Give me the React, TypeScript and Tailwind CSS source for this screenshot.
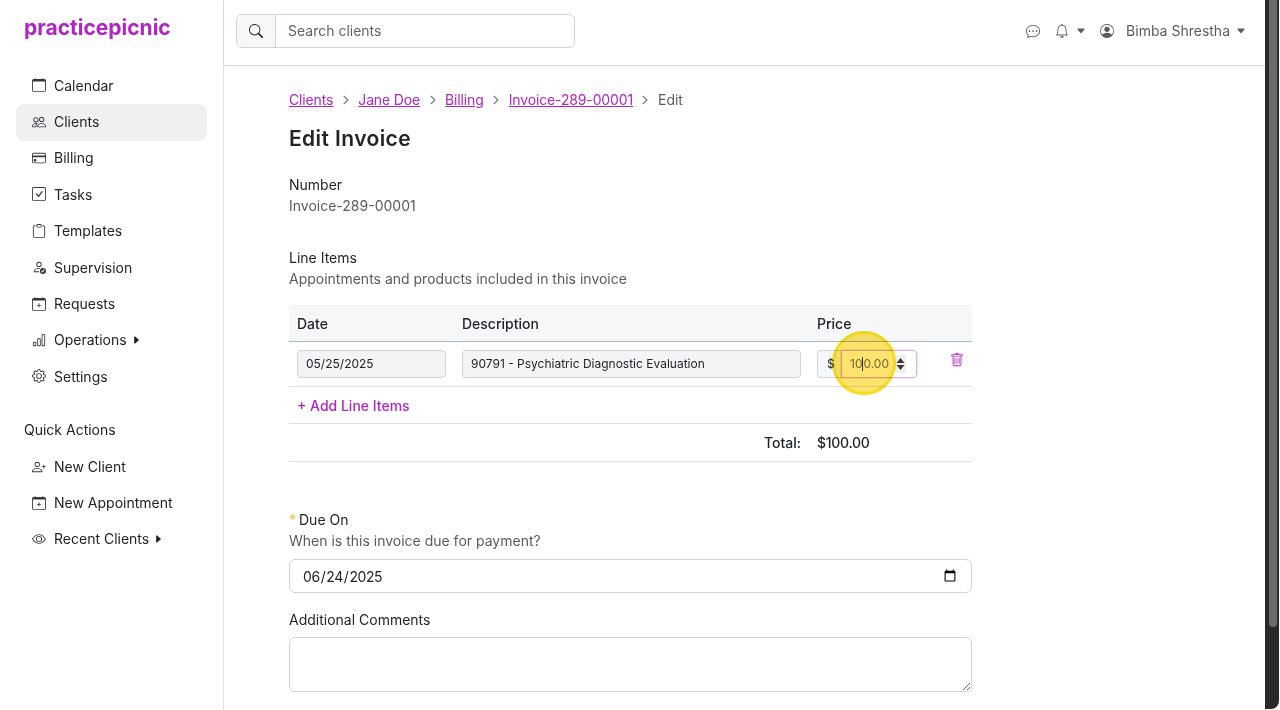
import React from "react";
import {
  BsBarChart,
  BsBell,
  BsCalendar,
  BsCalendarPlus,
  BsCaretDownFill,
  BsCaretRightFill,
  BsChatDots,
  BsCheckSquare,
  BsChevronRight,
  BsClipboard,
  BsCreditCard,
  BsEye,
  BsGear,
  BsPeople,
  BsPersonCheck,
  BsPersonCircle,
  BsPersonPlus,
  BsSearch,
  BsTrash,
} from "react-icons/bs";

function NavItem({
  icon,
  label,
  active,
  caret,
  compact,
}: {
  icon: React.ReactNode;
  label: string;
  active?: boolean;
  caret?: boolean;
  compact?: boolean;
}) {
  return (
    <div
      className={
        "flex items-center gap-2 rounded-lg pb-[2px] pl-4 text-[14px] text-[#212529] " +
        (compact ? "h-[36px] " : "h-[36.4px] ") +
        (active ? "bg-[#f0f0f0]" : "")
      }
    >
      <span className="flex w-[14px] justify-center text-[14px] text-[#343a40]">{icon}</span>
      <span>{label}</span>
      {caret && <BsCaretRightFill className="ml-[-4px] text-[10px]" />}
    </div>
  );
}

function Crumb({ label }: { label: string }) {
  return (
    <>
      <a className="tracking-[-0.01em] text-[#b025c4] underline">{label}</a>
      <BsChevronRight className="mx-[7.5px] text-[10px] text-[#6c757d]" strokeWidth={1.2} />
    </>
  );
}

export default function App() {
  return (
    <div
      className="flex h-[710px] w-[1280px] overflow-hidden bg-white text-[#212529]"
      style={{ fontFamily: '"Inter", "Noto Sans", sans-serif' }}
    >
      <aside className="w-[224px] shrink-0 border-r border-[#dee2e6] px-4">
        <div className="ml-2 pt-[14px] text-[21px] leading-[28px] font-bold text-[#b025c4]">practicepicnic</div>
        <nav className="mt-[26px]">
          <NavItem icon={<BsCalendar />} label="Calendar" />
          <NavItem icon={<BsPeople />} label="Clients" active />
          <NavItem icon={<BsCreditCard />} label="Billing" />
          <NavItem icon={<BsCheckSquare />} label="Tasks" />
          <NavItem icon={<BsClipboard />} label="Templates" />
          <NavItem icon={<BsPersonCheck />} label="Supervision" />
          <NavItem icon={<BsCalendarPlus />} label="Requests" />
          <NavItem icon={<BsBarChart />} label="Operations" caret />
          <NavItem icon={<BsGear />} label="Settings" />
        </nav>
        <div className="mt-[23px] ml-2 text-[14px] leading-[21px]">Quick Actions</div>
        <div className="mt-[10px]">
          <NavItem icon={<BsPersonPlus />} label="New Client" compact />
          <NavItem icon={<BsCalendarPlus />} label="New Appointment" compact />
          <NavItem icon={<BsEye />} label="Recent Clients" caret compact />
        </div>
      </aside>

      <div className="flex min-w-0 flex-1 flex-col">
        <header className="flex h-[66px] shrink-0 items-center border-b border-[#dee2e6] pr-[19px] pb-[4px] pl-3 shadow-[0_1px_3px_rgba(0,0,0,0.06)]">
          <div className="flex h-[34px] w-[339px] overflow-hidden rounded-md border border-[#ced4da] text-[14px]">
            <div className="flex w-[39px] items-center justify-center border-r border-[#ced4da] bg-[#f6f7f8]">
              <BsSearch className="text-[14px] text-[#212529]" />
            </div>
            <div className="flex flex-1 items-center pl-3 text-[#5f6368]">Search clients</div>
          </div>
          <div className="ml-auto flex items-center text-[14px] text-[#595c5f]">
            <BsChatDots className="text-[14px]" />
            <BsBell className="ml-[15px] text-[14px]" />
            <BsCaretDownFill className="ml-[7px] text-[10px]" />
            <BsPersonCircle className="ml-[14px] text-[14px]" />
            <span className="ml-[12px]">Bimba Shrestha</span>
            <BsCaretDownFill className="ml-[6px] text-[10px]" />
          </div>
        </header>

        <main className="relative flex-1 pt-[23px] pl-[65px]">
          <div className="flex h-[21px] items-center text-[14px] leading-[21px]">
            <Crumb label="Clients" />
            <Crumb label="Jane Doe" />
            <Crumb label="Billing" />
            <Crumb label="Invoice-289-00001" />
            <span className="text-[#595c5f]">Edit</span>
          </div>
          <h1 className="mt-[14px] text-[21px] leading-[30px] font-semibold tracking-[0.4px]">Edit Invoice</h1>

          <div className="mt-[20px] text-[14px] leading-[21px]">Number</div>
          <div className="text-[14px] leading-[21px] text-[#595c5f]">Invoice-289-00001</div>

          <div className="mt-[31px] text-[14px] leading-[21px]">Line Items</div>
          <div className="text-[14px] leading-[21px] text-[#595c5f]">Appointments and products included in this invoice</div>

          <div className="mt-[16px] w-[683px] text-[14px]">
            <div className="flex h-[37px] items-center border-b border-[#adb5bd] bg-[#f6f7f8] font-medium">
              <div className="w-[165px] pl-2">Date</div>
              <div className="w-[355px] pl-2">Description</div>
              <div className="pl-2">Price</div>
            </div>
            <div className="flex h-[45px] items-center border-b border-[#dee2e6] text-[12px]">
              <div className="w-[165px] pl-2">
                <div className="flex h-[28px] w-[149px] items-center rounded-[4px] border border-[#ced4da] bg-[#f3f4f5] pl-2">
                  05/25/2025
                </div>
              </div>
              <div className="w-[355px] pl-2">
                <div className="flex h-[28px] w-[339px] items-center rounded-[4px] border border-[#ced4da] bg-[#f3f4f5] pl-2">
                  90791 - Psychiatric Diagnostic Evaluation
                </div>
              </div>
              <div className="ml-2 flex h-[28px] w-[100px]">
                <div className="flex w-[24px] items-center rounded-l-[4px] border border-r-0 border-[#ced4da] bg-[#f6f7f8] pl-[9px]">$</div>
                <div className="flex flex-1 items-center rounded-r-[4px] border border-[#d8b4e8] pl-2 text-[#777777] shadow-[0_0_0_1px_rgba(176,37,196,0.12)]">
                  <span>10</span>
                  <span className="h-[14px] w-px bg-[#333333]" />
                  <span>0.00</span>
                  <span className="mr-[10px] ml-auto flex h-[18px] w-[11px] items-center justify-center bg-[#efefef]">
                    <svg width="9" height="14" viewBox="0 0 9 14">
                      <path d="M4.5 1 L8.5 6 H0.5 Z M4.5 13 L8.5 8 H0.5 Z" fill="#3b3b3b" />
                    </svg>
                  </span>
                </div>
              </div>
              <BsTrash className="ml-[33px] -translate-y-[4px] text-[14px] text-[#b025c4]" />
            </div>
            <div className="flex h-[37px] items-center border-b border-[#dee2e6] pl-2 font-medium text-[#b025c4]">+ Add Line Items</div>
            <div className="flex h-[38px] items-center border-b border-[#dee2e6] font-medium">
              <div className="w-[512px] text-right">Total:</div>
              <div className="ml-4 tracking-[-0.02em]">$100.00</div>
            </div>
          </div>

          <div className="mt-[48px] flex text-[14px] leading-[20px]">
            <span className="mr-[3px] text-[#fbb92f]">*</span>
            <span>Due On</span>
          </div>
          <div className="text-[14px] leading-[21px] text-[#595c5f]">When is this invoice due for payment?</div>
          <input
            type="date"
            defaultValue="2025-06-24"
            className="mt-[8px] block h-[34px] w-[683px] rounded-md border border-[#ced4da] px-3 text-[14px] tracking-[-0.03em]"
          />
          <div className="mt-[16px] text-[14px] leading-[21px]">Additional Comments</div>
          <textarea className="mt-[7px] block h-[55px] w-[683px] rounded-md border border-[#ced4da]" />

          {/* click highlight from the screen recording */}
          <div className="absolute top-[265px] left-[608px] h-[64px] w-[64px] rounded-full border-[3px] border-[#f7dc1e] bg-[#fde36c] mix-blend-multiply" />
        </main>
      </div>

      <div className="w-[15px] shrink-0">
        <div className="h-[709px] w-[14px] rounded-br-[8px] bg-[#2a2a2a] pl-[4px]">
          <div className="h-[627px] w-[8px] rounded-b-[4px] bg-[#6b6b6b]" />
        </div>
      </div>
    </div>
  );
}
